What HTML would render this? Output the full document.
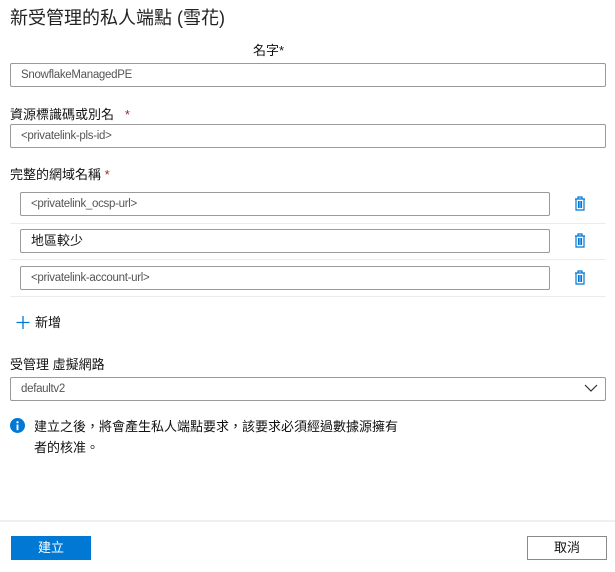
<!DOCTYPE html>
<html><head><meta charset="utf-8"><style>
*{box-sizing:border-box;margin:0;padding:0}
body{width:615px;height:572px;background:#fff;font-family:"Liberation Sans","Noto Sans CJK TC",sans-serif;color:#111;font-size:13px;position:relative;overflow:hidden}
.a{position:absolute}
.inp{position:absolute;border:1px solid #9a9a9a;border-radius:2px;height:24px;padding-left:10px;line-height:22px;font-size:11.5px;letter-spacing:-0.3px;color:#555;background:#fff}
.sep{position:absolute;left:10px;width:596px;height:1px;background:#ececec}
.lbl{position:absolute;font-size:13px;color:#111}
.st{color:#a4262c}
</style></head><body>
<div class="a" style="left:10px;top:4px;font-size:18px;color:#222">新受管理的私人端點 (雪花)</div>
<div class="lbl" style="left:253px;top:40px">名字<span>*</span></div>
<div class="inp" style="left:10px;top:63px;width:596px">SnowflakeManagedPE</div>
<div class="lbl" style="left:10px;top:104px">資源標識碼或別名 &nbsp;&nbsp;<span class="st">*</span></div>
<div class="inp" style="left:10px;top:124px;width:596px">&lt;privatelink-pls-id&gt;</div>
<div class="lbl" style="left:10px;top:164px">完整的網域名稱 <span class="st">*</span></div>
<div class="inp" style="left:20px;top:192px;width:530px">&lt;privatelink_ocsp-url&gt;</div>
<div class="sep" style="top:223px"></div>
<div class="inp" style="left:20px;top:229px;width:530px;color:#111;font-size:13px;letter-spacing:0">地區較少</div>
<div class="sep" style="top:259px"></div>
<div class="inp" style="left:20px;top:266px;width:530px">&lt;privatelink-account-url&gt;</div>
<div class="sep" style="top:296px"></div>
<svg class="a" style="left:574px;top:196px" width="12" height="15" viewBox="0 0 12 15"><path d="M1 3h10M4 3V1h4v2M2 3v11h8V3M4.5 5v7M6 5v7M7.5 5v7" stroke="#0078d4" stroke-width="1.2" fill="none"/></svg>
<svg class="a" style="left:574px;top:233px" width="12" height="15" viewBox="0 0 12 15"><path d="M1 3h10M4 3V1h4v2M2 3v11h8V3M4.5 5v7M6 5v7M7.5 5v7" stroke="#0078d4" stroke-width="1.2" fill="none"/></svg>
<svg class="a" style="left:574px;top:270px" width="12" height="15" viewBox="0 0 12 15"><path d="M1 3h10M4 3V1h4v2M2 3v11h8V3M4.5 5v7M6 5v7M7.5 5v7" stroke="#0078d4" stroke-width="1.2" fill="none"/></svg>
<svg class="a" style="left:16px;top:315px" width="14" height="14" viewBox="0 0 14 14"><path d="M7 1v13M0.5 7.5h13" stroke="#0078d4" stroke-width="1.3"/></svg>
<div class="lbl" style="left:35px;top:312px">新增</div>
<div class="lbl" style="left:10px;top:354px">受管理 虛擬網路</div>
<div class="inp" style="left:10px;top:377px;width:596px">defaultv2</div>
<svg class="a" style="left:584px;top:384px" width="14" height="9" viewBox="0 0 14 9"><path d="M1 1l6 6 6-6" stroke="#333" stroke-width="1.2" fill="none"/></svg>
<svg class="a" style="left:10px;top:418px" width="15" height="15" viewBox="0 0 16 16"><circle cx="8" cy="8" r="8" fill="#0078d4"/><rect x="7" y="7" width="2" height="6" fill="#fff"/><circle cx="8" cy="4.5" r="1.2" fill="#fff"/></svg>
<div class="lbl" style="left:34px;top:416px;line-height:21px;width:390px">建立之後，將會產生私人端點要求，該要求必須經過數據源擁有<br>者的核准。</div>
<div class="a" style="left:0;top:520px;width:615px;height:2px;background:#f0f0f0"></div>
<div class="a" style="left:11px;top:536px;width:80px;height:24px;background:#0078d4;color:#fff;text-align:center;line-height:24px;font-size:13px">建立</div>
<div class="a" style="left:527px;top:536px;width:80px;height:24px;border:1px solid #8a8a8a;text-align:center;line-height:22px;font-size:13px">取消</div>
</body></html>
